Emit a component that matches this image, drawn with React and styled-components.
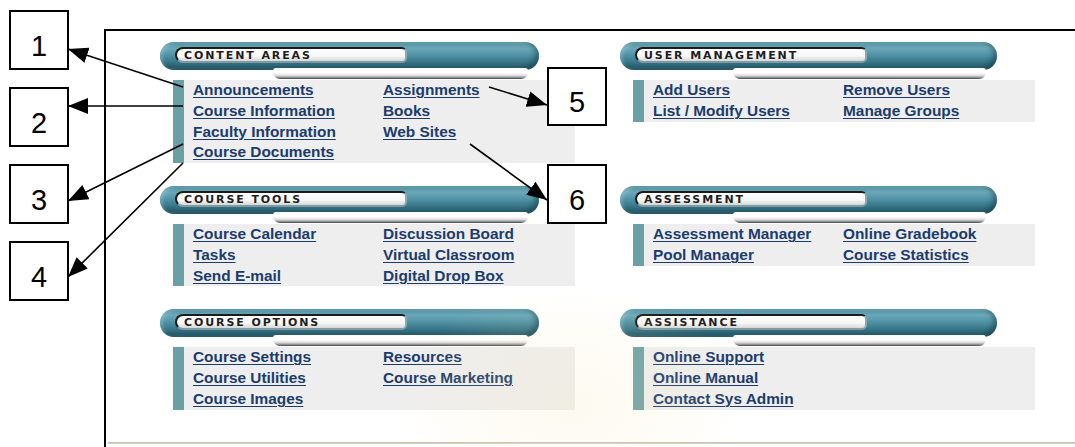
import React from 'react';
import styled, { createGlobalStyle } from 'styled-components';

const Global = createGlobalStyle`
  html, body { margin: 0; padding: 0; background: #fff; }
  body { font-family: "Liberation Sans", Arial, sans-serif; }
  * { box-sizing: border-box; }
`;

const Page = styled.div`
  position: relative;
  width: 1075px;
  height: 447px;
  overflow: hidden;
  display: flex;
  background: #fff;
`;

const Gutter = styled.div`
  width: 104px;
  flex: none;
  display: flex;
  flex-direction: column;
  gap: 17px;
  padding: 10px 0 0 9px;
`;

const Callout = styled.div`
  width: 60px;
  height: ${p => p.$h || 60}px;
  border: 2px solid #000;
  background: #fff;
  display: flex;
  align-items: center;
  justify-content: center;
  padding-top: 12px;
  font-family: "Liberation Sans", Arial, sans-serif;
  font-size: 29px;
  color: #000;
  line-height: 1;
`;

const FloatingCallout = styled(Callout)`
  position: absolute;
  z-index: 3;
`;

const Frame = styled.div`
  flex: 1;
  margin-top: 29px;
  border-top: 2px solid #000;
  border-left: 2px solid #000;
  padding-top: 11px;
  display: flex;
  flex-direction: column;
`;

const Grid = styled.div`
  margin-left: 54px;
  display: grid;
  grid-template-columns: 460px 1fr;
  row-gap: 23px;
  align-items: start;
`;

const Section = styled.div`
  display: flex;
  flex-direction: column;
  width: 415px;
`;

const Pill = styled.div`
  width: ${p => p.$w}px;
  height: 28px;
  border-radius: 14px;
  background: linear-gradient(to bottom, #4a8a9c 0%, #6ba8b8 22%, #5597a9 42%, #3b7a8c 68%, #2c6475 88%, #3a7080 100%);
  box-shadow: inset -4px -2px 5px rgba(10, 50, 60, 0.45), inset 3px 2px 3px rgba(160, 210, 220, 0.35);
  padding: 5px 0 0 15px;
  position: relative;
`;

const Label = styled.div`
  width: 232px;
  height: 16px;
  border: 2px solid #1c1c1c;
  border-right-color: #8fa8ae;
  border-bottom-color: #7f9ca3;
  border-radius: 9px 6px 6px 9px;
  background: linear-gradient(to bottom, #ffffff 0%, #f7f7f7 60%, #d6d6d6 100%);
  display: flex;
  align-items: center;
  padding-left: 7px;
  font-family: "DejaVu Sans", Verdana, sans-serif;
  font-weight: bold;
  font-size: 11px;
  letter-spacing: 1.9px;
  color: #1e1e1e;
  white-space: nowrap;
  overflow: hidden;
`;

const UnderBar = styled.div`
  position: relative;
  z-index: 1;
  margin: -2px 0 0 113px;
  width: ${p => p.$w}px;
  height: 11px;
  border-radius: 3px 3px 7px 7px;
  background: linear-gradient(to bottom, #ffffff 0%, #ffffff 45%, #d9d9d9 70%, #8a8a8a 88%, #3e3e3e 100%);
`;

const LinkBox = styled.div`
  margin: 1px 0 0 13px;
  width: 402px;
  background: #eeeeee;
  border-left: 11px solid #6b9fa6;
  padding-left: 9px;
  display: grid;
  grid-template-columns: 190px 1fr;
`;

const LinkCol = styled.div`
  display: flex;
  flex-direction: column;
`;

const Link = styled.a`
  display: block;
  width: max-content;
  font-family: "Liberation Sans", Arial, sans-serif;
  font-weight: bold;
  font-size: 15.4px;
  line-height: 20.75px;
  color: #1b3b6d;
  text-decoration: underline;
  text-decoration-thickness: 1px;
  text-underline-offset: 2px;
  cursor: pointer;
`;

const Separator = styled.div`
  margin: 32px 0 0 2px;
  height: 2px;
  background: linear-gradient(to bottom, #bdbdac, #d8d8cc);
`;

const Watermark = styled.div`
  position: absolute;
  left: 400px;
  top: 290px;
  width: 340px;
  height: 230px;
  border-radius: 50%;
  background: radial-gradient(ellipse at center, rgba(245, 230, 180, 0.2) 0%, rgba(245, 230, 180, 0.1) 45%, rgba(245, 230, 180, 0) 72%);
  pointer-events: none;
  z-index: 2;
`;

const ArrowLayer = styled.svg`
  position: absolute;
  left: 0;
  top: 0;
  width: 1075px;
  height: 447px;
  pointer-events: none;
  z-index: 4;
`;

const sections = [
  { title: 'CONTENT AREAS', w: 379, cols: [['Announcements', 'Course Information', 'Faculty Information', 'Course Documents'], ['Assignments', 'Books', 'Web Sites']] },
  { title: 'USER MANAGEMENT', w: 377, cols: [['Add Users', 'List / Modify Users'], ['Remove Users', 'Manage Groups']] },
  { title: 'COURSE TOOLS', w: 379, cols: [['Course Calendar', 'Tasks', 'Send E-mail'], ['Discussion Board', 'Virtual Classroom', 'Digital Drop Box']] },
  { title: 'ASSESSMENT', w: 377, cols: [['Assessment Manager', 'Pool Manager'], ['Online Gradebook', 'Course Statistics']] },
  { title: 'COURSE OPTIONS', w: 379, cols: [['Course Settings', 'Course Utilities', 'Course Images'], ['Resources', 'Course Marketing']] },
  { title: 'ASSISTANCE', w: 377, cols: [['Online Support', 'Online Manual', 'Contact Sys Admin'], []] },
];

const arrows = [
  [183, 87, 68, 49],
  [183, 106, 68, 106],
  [183, 144, 68, 201],
  [183, 163, 68, 277],
  [489, 87, 547, 105],
  [470, 144, 547, 200],
];

function MenuSection({ s }) {
  return (
    <Section>
      <Pill $w={s.w}>
        <Label>{s.title}</Label>
      </Pill>
      <UnderBar $w={s.w - 124} />
      <LinkBox>
        {s.cols.map((col, i) => (
          <LinkCol key={i}>
            {col.map(l => <Link key={l}>{l}</Link>)}
          </LinkCol>
        ))}
      </LinkBox>
    </Section>
  );
}

export default function App() {
  return (
    <>
      <Global />
      <Page>
        <Gutter>
          <Callout>1</Callout>
          <Callout>2</Callout>
          <Callout>3</Callout>
          <Callout>4</Callout>
        </Gutter>
        <Frame>
          <Grid>
            {sections.map(s => <MenuSection key={s.title} s={s} />)}
          </Grid>
          <Separator />
        </Frame>
        <Watermark />
        <FloatingCallout style={{ left: 547, top: 67 }} $h={59}>5</FloatingCallout>
        <FloatingCallout style={{ left: 547, top: 164 }}>6</FloatingCallout>
        <ArrowLayer viewBox="0 0 1075 447">
          <defs>
            <marker id="head" viewBox="0 0 20 16" refX="20" refY="8" markerWidth="20" markerHeight="16" markerUnits="userSpaceOnUse" orient="auto">
              <path d="M0,0 L20,8 L0,16 z" fill="#000" />
            </marker>
          </defs>
          {arrows.map(([x1, y1, x2, y2], i) => (
            <line key={i} x1={x1} y1={y1} x2={x2} y2={y2} stroke="#000" strokeWidth="1.6" markerEnd="url(#head)" />
          ))}
        </ArrowLayer>
      </Page>
    </>
  );
}
